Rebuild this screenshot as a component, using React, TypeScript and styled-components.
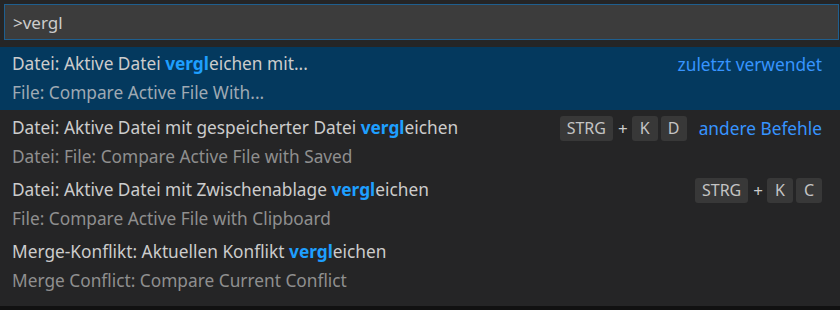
import React from "react";
import styled, { createGlobalStyle } from "styled-components";

type Keys = string[][];

type Entry = {
  before: string;
  match: string;
  after: string;
  detail: string;
  keys?: Keys;
  note?: string;
  selected?: boolean;
};

const entries: Entry[] = [
  {
    before: "Datei: Aktive Datei ",
    match: "vergl",
    after: "eichen mit...",
    detail: "File: Compare Active File With...",
    note: "zuletzt verwendet",
    selected: true,
  },
  {
    before: "Datei: Aktive Datei mit gespeicherter Datei ",
    match: "vergl",
    after: "eichen",
    detail: "Datei: File: Compare Active File with Saved",
    keys: [["STRG", "K"], ["D"]],
    note: "andere Befehle",
  },
  {
    before: "Datei: Aktive Datei mit Zwischenablage ",
    match: "vergl",
    after: "eichen",
    detail: "File: Compare Active File with Clipboard",
    keys: [["STRG", "K"], ["C"]],
  },
  {
    before: "Merge-Konflikt: Aktuellen Konflikt ",
    match: "vergl",
    after: "eichen",
    detail: "Merge Conflict: Compare Current Conflict",
  },
];

const GlobalStyle = createGlobalStyle`
  html, body {
    margin: 0;
    padding: 0;
    background: #252526;
  }
  body {
    font-family: "Noto Sans", "Open Sans", sans-serif;
  }
`

const Palette = styled.div`
  width: 840px;
  height: 310px;
  background: #252526;
  display: flex;
  flex-direction: column;
  box-sizing: border-box;
  border-bottom: 4px solid #111111;
  overflow: hidden;
`

const InputWrap = styled.div`
  padding: 4px 1px 7px 4px;
`

const Input = styled.div`
  height: 36px;
  box-sizing: border-box;
  background: #3c3c3c;
  border: 1px solid #1f5f8f;
  color: #cccccc;
  font-size: 17px;
  display: flex;
  align-items: center;
  padding-left: 8px;
`

const List = styled.div`
  display: flex;
  flex-direction: column;
`

const Row = styled.div<{ $selected?: boolean }>`
  height: ${({ $selected }) => ($selected ? "63px" : "62px")};
  box-sizing: border-box;
  padding: ${({ $selected }) => ($selected ? "4px" : "5px")} 18px 0 12px;
  background: ${({ $selected }) => ($selected ? "#04395e" : "transparent")};
  display: flex;
  flex-direction: column;
  gap: 3px;
`

const Line = styled.div`
  display: flex;
  align-items: center;
  height: 26px;
`

const Label = styled.span`
  flex: 1;
  color: #cccccc;
  font-size: 17.3px;
  line-height: 26px;
  white-space: nowrap;
`

const Match = styled.span`
  color: #1e9fff;
  font-weight: 700;
`

const Detail = styled.div<{ $selected?: boolean }>`
  color: ${({ $selected }) => ($selected ? "#9fa9b3" : "#8f8f8f")};
  font-size: 17.3px;
  line-height: 26px;
  white-space: nowrap;
`

const Keybinding = styled.div`
  display: flex;
  align-items: center;
  gap: 3px;
`

const Chord = styled.div`
  display: flex;
  align-items: center;
`

const Key = styled.span`
  height: 25px;
  min-width: 26px;
  box-sizing: border-box;
  padding: 0 7px;
  border-radius: 3px;
  background: #383838;
  color: #c4c4c4;
  font-size: 16px;
  display: inline-flex;
  align-items: center;
  justify-content: center;
`

const Plus = styled.span`
  color: #cccccc;
  font-size: 17px;
  padding: 0 4px 0 5px;
`

const Note = styled.span`
  color: #3794ff;
  font-size: 17.3px;
  margin-left: 12px;
`

const Shortcut = ({ keys }: { keys: Keys }) => (
  <Keybinding>
    {keys.map((chord, i) => (
      <Chord key={i}>
        {chord.map((k, j) => (
          <React.Fragment key={k}>
            {j > 0 ? <Plus>+</Plus> : null}
            <Key>{k}</Key>
          </React.Fragment>
        ))}
      </Chord>
    ))}
  </Keybinding>
)

const App = () => {
  return (
    <Palette>
      <GlobalStyle />
      <InputWrap>
        <Input>&gt;vergl</Input>
      </InputWrap>
      <List>
        {entries.map((e) => (
          <Row key={e.detail} $selected={e.selected}>
            <Line>
              <Label>
                {e.before}
                <Match>{e.match}</Match>
                {e.after}
              </Label>
              {e.keys ? <Shortcut keys={e.keys} /> : null}
              {e.note ? <Note>{e.note}</Note> : null}
            </Line>
            <Detail $selected={e.selected}>{e.detail}</Detail>
          </Row>
        ))}
      </List>
    </Palette>
  );
}

export default App
